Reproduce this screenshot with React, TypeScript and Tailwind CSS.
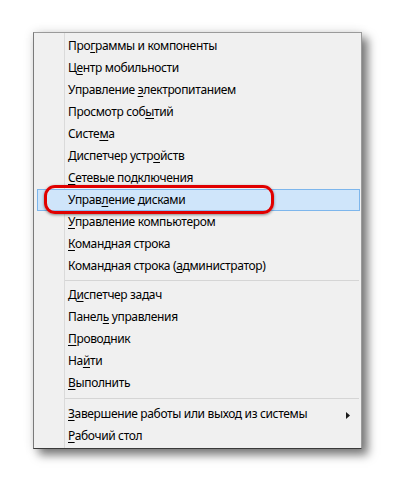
import type { ReactNode } from 'react';

type Item = { pre: string; key: string; post: string; arrow?: boolean };

const groups: Item[][] = [
  [
    { pre: 'Про', key: 'г', post: 'раммы и компоненты' },
    { pre: 'Ц', key: 'е', post: 'нтр мобильности' },
    { pre: 'Управление ', key: 'э', post: 'лектропитанием' },
    { pre: 'Просмотр соб', key: 'ы', post: 'тий' },
    { pre: 'Систе', key: 'м', post: 'а' },
    { pre: 'Диспетчер устр', key: 'о', post: 'йств' },
    { pre: '', key: 'С', post: 'етевые подключения' },
    { pre: 'Управ', key: 'л', post: 'ение дисками' },
    { pre: '', key: 'У', post: 'правление компьютером' },
    { pre: '', key: 'К', post: 'омандная строка' },
    { pre: 'Командная строка (', key: 'а', post: 'дминистратор)' },
  ],
  [
    { pre: 'Д', key: 'и', post: 'спетчер задач' },
    { pre: 'Панел', key: 'ь', post: ' управления' },
    { pre: '', key: 'П', post: 'роводник' },
    { pre: 'На', key: 'й', post: 'ти' },
    { pre: '', key: 'В', post: 'ыполнить' },
  ],
  [
    { pre: '', key: 'З', post: 'авершение работы или выход из системы', arrow: true },
    { pre: '', key: 'Р', post: 'абочий стол' },
  ],
];

const Row = ({ item, active }: { item: Item; active?: boolean }): ReactNode => (
  <div
    className={
      'relative flex h-[22px] items-center ml-[3px] mr-[1px] pl-[30px] pr-3 border ' +
      (active ? 'bg-[#cfe5fa] border-[#7db6ec]' : 'border-transparent')
    }
  >
    <span className="whitespace-pre">
      {item.pre}
      <span className="underline underline-offset-[2px]">{item.key}</span>
      {item.post}
    </span>
    {item.arrow && (
      <svg className="absolute right-[9px] top-[8px]" width="4" height="7" viewBox="0 0 4 7">
        <path d="M0 0 L4 3.5 L0 7 Z" fill="#1a1a1a" />
      </svg>
    )}
    {active && (
      <div className="absolute left-[6px] top-[-5px] w-[230px] h-[29px] rounded-[11px] border-[3px] border-[#e00000] shadow-[0_1px_3px_rgba(0,0,0,0.45),inset_0_0_1px_rgba(255,255,255,0.9)]" />
    )}
  </div>
);

export default function App() {
  return (
    <div
      className="w-[393px] h-[481px] bg-white pt-[32px] pl-[33px] text-[12px] tracking-[-0.35px] text-black"
      style={{ fontFamily: '"Noto Sans", "Open Sans", sans-serif' }}
    >
      <div className="relative w-[329px] h-[417px] bg-[#f0f0f0] border border-[#9a9a9a] border-b-[#3a3a3a] border-l-[#7a7a7a] py-[2px] shadow-[6px_6px_9px_rgba(0,0,0,0.5),0_0_10px_rgba(0,0,0,0.12)]">
        {/* gutter */}
        <div className="absolute left-[30px] top-0 bottom-0 w-px bg-[#dadada]" />
        {groups.map((group, gi) => (
          <div key={gi}>
            {gi > 0 && (
              <div className={'flex items-center pl-[30px] pr-[2px] ' + (gi === 2 ? 'h-[9px]' : 'h-[7px]')}>
                <div className="h-px w-full bg-[#d5d5d5]" />
              </div>
            )}
            {group.map((item, i) => (
              <Row key={i} item={item} active={gi === 0 && i === 7} />
            ))}
          </div>
        ))}
      </div>
    </div>
  );
}
